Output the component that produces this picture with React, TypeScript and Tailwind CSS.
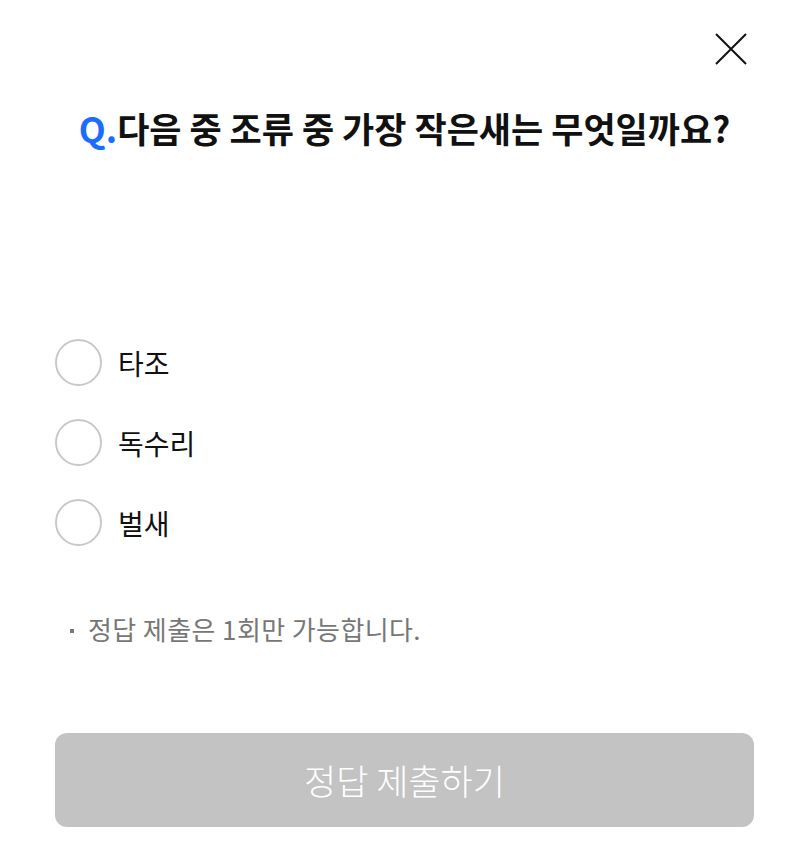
import { useState } from "react";

const options = ["타조", "독수리", "벌새"];

const CloseIcon = () => (
  <svg width="34" height="34" viewBox="0 0 34 34" fill="none">
    <path d="M2 2L32 32M32 2L2 32" stroke="#111" strokeWidth="2" />
  </svg>
);

export default function App() {
  const [picked, setPicked] = useState<number | null>(null);

  return (
    <div
      className="relative h-[862px] w-[809px] bg-white px-[55px]"
      style={{ fontFamily: '"Noto Sans CJK KR", "Noto Sans", sans-serif' }}
    >
      <button className="absolute right-[61px] top-[32px]" aria-label="닫기">
        <CloseIcon />
      </button>

      <h2 className="pt-[104px] text-center text-[35px] font-bold leading-[48px] text-[#111]">
        <span className="text-[#1a6dff]">Q.</span>다음 중 조류 중 가장 작은새는 무엇일까요?
      </h2>

      <ul className="mt-[187px] flex flex-col gap-[33px]">
        {options.map((opt, i) => (
          <li key={opt}>
            <label
              className="flex cursor-pointer items-center gap-[16px]"
              onClick={() => setPicked(i)}
            >
              <span
                className={
                  picked === i
                    ? "h-[47px] w-[47px] rounded-full border-[2px] border-[#1a6dff]"
                    : "h-[47px] w-[47px] rounded-full border-[2px] border-[#c8c8c8]"
                }
              />
              <span className="text-[28px] leading-[40px] text-[#111]">{opt}</span>
            </label>
          </li>
        ))}
      </ul>

      <p className="mt-[64px] flex items-center pl-[15px] text-[26px] leading-[38px] tracking-[0.4px] text-[#777]">
        <span className="mr-[14px] mt-[4px] h-[4px] w-[4px] bg-[#777]" />정답 제출은 1회만 가능합니다.
      </p>

      <button
        disabled={picked === null}
        className="mt-[85px] flex h-[94px] w-full items-center justify-center rounded-[12px] bg-[#c3c3c3] text-[35px] font-light text-white"
      >
        정답 제출하기
      </button>
    </div>
  );
}
